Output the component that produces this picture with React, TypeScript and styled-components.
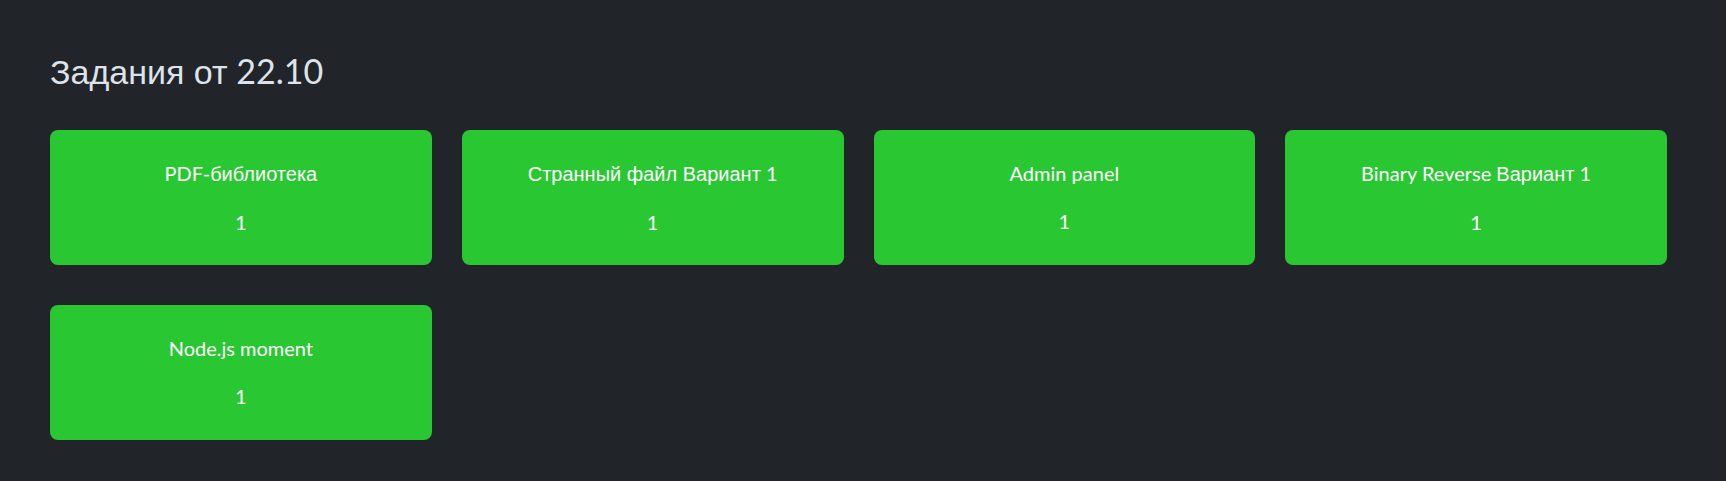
import React from 'react';
import styled, { createGlobalStyle } from 'styled-components';

type Task = {
  id: number;
  title: string;
  count: number;
};

const tasks: Task[] = [
  { id: 1, title: 'PDF-библиотека', count: 1 },
  { id: 2, title: 'Странный файл Вариант 1', count: 1 },
  { id: 3, title: 'Admin panel', count: 1 },
  { id: 4, title: 'Binary Reverse Вариант 1', count: 1 },
  { id: 5, title: 'Node.js moment', count: 1 },
];

// the site font has only latin glyphs, cyrillic falls back to arial
const MixedText = ({ text }: { text: string }) => {
  const parts = text.split(/([А-Яа-яЁё]+(?:[\s-]+[А-Яа-яЁё]+)*)/);
  return (
    <>
      {parts.map((part, i) =>
        /[А-Яа-яЁё]/.test(part) ? <Cyr key={i}>{part}</Cyr> : <span key={i}>{part}</span>
      )}
    </>
  );
};

export default function App() {
  return (
    <>
      <GlobalStyle />
      <Page>
        <Title>
          <MixedText text="Задания от 22.10" />
        </Title>
        <Grid>
          {tasks.map((task) => (
            <Card key={task.id}>
              <CardTitle>
                <MixedText text={task.title} />
              </CardTitle>
              <CardCount>{task.count}</CardCount>
            </Card>
          ))}
        </Grid>
      </Page>
    </>
  );
}

const GlobalStyle = createGlobalStyle`
  html, body {
    margin: 0;
    padding: 0;
    background: #212429;
  }
  body {
    font-family: Lato, "Liberation Sans", sans-serif;
  }
`;

const Page = styled.div`
  min-height: 481px;
  box-sizing: border-box;
  padding: 50px 59px 0 50px;
  background: #212429;
`;

const Cyr = styled.span`
  font-family: "Liberation Sans", Arial, sans-serif;
`;

const Title = styled.h2`
  margin: 0 0 37px;
  font-size: 34px;
  line-height: 42px;
  font-weight: 400;
  color: #dee3ea;
`;

const Grid = styled.div`
  display: grid;
  grid-template-columns: repeat(4, 1fr);
  column-gap: 30px;
  row-gap: 40px;
`;

const Card = styled.div`
  display: flex;
  flex-direction: column;
  align-items: center;
  gap: 24px;
  height: 135px;
  box-sizing: border-box;
  padding: 31px 16px 32px;
  background: #29c832;
  border-radius: 8px;
  color: #ffffff;
  cursor: pointer;
`;

const CardTitle = styled.div`
  font-size: 20px;
  line-height: 24px;
  text-align: center;
`;

const CardCount = styled.div`
  font-size: 20px;
  line-height: 24px;
`;
